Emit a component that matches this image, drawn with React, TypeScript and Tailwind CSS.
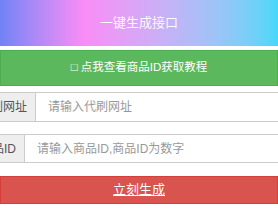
import React from 'react'

const font = { fontFamily: '"Liberation Sans", "Noto Sans CJK SC", sans-serif' }

export default function App() {
  return (
    <div className="w-[278px] h-[220px] overflow-hidden bg-white" style={font}>
      {/* Banner */}
      <div className="h-[46px] flex items-center justify-center text-white/95 text-[13px] bg-gradient-to-r from-[#6f82f6] via-[#f98cf6] via-30% to-[#43d8f8]">
        一键生成接口
      </div>

      {/* Tutorial link */}
      <div className="mt-1 h-[36px] bg-[#5cb85c] border border-[#4cae4c] flex items-center justify-center text-white text-[11.5px]">
        □ 点我查看商品ID获取教程
      </div>

      {/* Site url */}
      <div className="mt-1.5 flex h-[30px] text-[12px]">
        <div className="w-[36px] shrink-0 overflow-hidden flex items-center justify-end pr-2 bg-[#eee] border border-[#ccc] border-l-0 text-[#555] whitespace-nowrap">
          代刷网址
        </div>
        <input
          className="flex-1 min-w-0 border border-[#ccc] border-l-0 border-r-0 pl-3 outline-none placeholder:text-[#999]"
          placeholder="请输入代刷网址"
        />
      </div>

      {/* Goods id */}
      <div className="mt-3 flex h-[29px] text-[12px]">
        <div className="w-[25px] shrink-0 overflow-hidden flex items-center justify-end pr-2 bg-[#eee] border border-[#ccc] border-l-0 text-[#555] whitespace-nowrap">
          商品ID
        </div>
        <input
          className="flex-1 min-w-0 border border-[#ccc] border-l-0 border-r-0 pl-3 outline-none placeholder:text-[#999]"
          placeholder="请输入商品ID,商品ID为数字"
        />
      </div>

      {/* Submit */}
      <div className="mt-[13px] h-[28px] bg-[#d9534f] border border-[#d43f3a] flex items-center justify-center">
        <span className="text-white text-[13px] underline">立刻生成</span>
      </div>
    </div>
  )
}
